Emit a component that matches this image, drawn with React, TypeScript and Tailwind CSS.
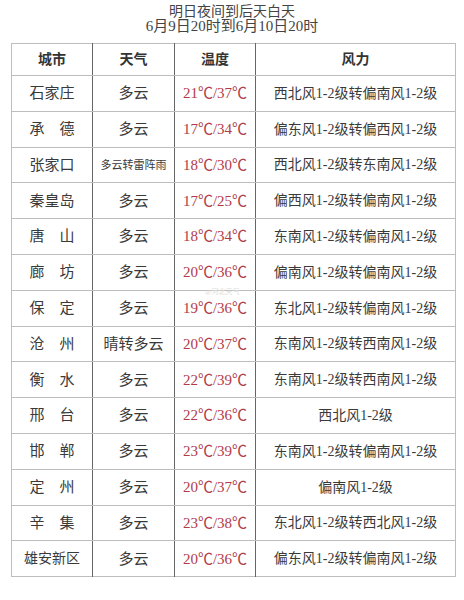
import React from 'react';

const rows: [string, string, string, string][] = [
  ['石家庄', '多云', '21℃/37℃', '西北风1-2级转偏南风1-2级'],
  ['承　德', '多云', '17℃/34℃', '偏东风1-2级转偏西风1-2级'],
  ['张家口', '多云转雷阵雨', '18℃/30℃', '西北风1-2级转东南风1-2级'],
  ['秦皇岛', '多云', '17℃/25℃', '偏西风1-2级转偏南风1-2级'],
  ['唐　山', '多云', '18℃/34℃', '东南风1-2级转偏南风1-2级'],
  ['廊　坊', '多云', '20℃/36℃', '偏南风1-2级转偏南风1-2级'],
  ['保　定', '多云', '19℃/36℃', '东北风1-2级转偏南风1-2级'],
  ['沧　州', '晴转多云', '20℃/37℃', '东南风1-2级转西南风1-2级'],
  ['衡　水', '多云', '22℃/39℃', '东南风1-2级转西南风1-2级'],
  ['邢　台', '多云', '22℃/36℃', '西北风1-2级'],
  ['邯　郸', '多云', '23℃/39℃', '东南风1-2级转偏南风1-2级'],
  ['定　州', '多云', '20℃/37℃', '偏南风1-2级'],
  ['辛　集', '多云', '23℃/38℃', '东北风1-2级转西北风1-2级'],
  ['雄安新区', '多云', '20℃/36℃', '偏东风1-2级转偏南风1-2级'],
];

const font = { fontFamily: '"Liberation Serif", "Noto Sans CJK SC", serif' };

export default function App() {
  return (
    <div className="w-[464px] h-[600px] bg-white text-[#3a3a3a] relative" style={font}>
      <div className="pt-[5px] text-center text-[14px] leading-[14px] text-[#444]">
        <p>明日夜间到后天白天</p>
        <p className="text-[15px]">6月9日20时到6月10日20时</p>
      </div>
      <div className="px-[11px] pt-[10px]">
        <table className="w-[444px] border-collapse table-fixed border border-[#bdbdbd]">
          <colgroup>
            <col className="w-[81px]" />
            <col className="w-[82px]" />
            <col className="w-[81px]" />
            <col className="w-[200px]" />
          </colgroup>
          <thead>
            <tr className="h-[32px] text-[14px] font-bold text-[#333]">
              <th className="border-r border-r-[#666] border-b border-b-[#bdbdbd]">城市</th>
              <th className="border-r border-r-[#666] border-b border-b-[#bdbdbd]">天气</th>
              <th className="border-r border-r-[#666] border-b border-b-[#bdbdbd]">温度</th>
              <th className="border-b border-b-[#bdbdbd]">风力</th>
            </tr>
          </thead>
          <tbody>
            {rows.map(([city, weather, temp, wind], i) => (
              <tr key={city} className="h-[35.8px]">
                <td className={`text-center border-r border-r-[#666] ${i < rows.length - 1 ? 'border-b border-b-[#bdbdbd]' : ''} ${city.length > 3 ? 'text-[14px]' : 'text-[15px]'}`}>
                  {city}
                </td>
                <td className={`text-center border-r border-r-[#666] ${i < rows.length - 1 ? 'border-b border-b-[#bdbdbd]' : ''} ${weather.length > 4 ? 'text-[11px]' : 'text-[15px]'}`}>
                  {weather}
                </td>
                <td className={`text-center border-r border-r-[#666] text-[15px] text-[#b23a48] ${i < rows.length - 1 ? 'border-b border-b-[#bdbdbd]' : ''}`}>
                  {temp}
                </td>
                <td className={`text-center text-[14px] text-[#3a3a3a] ${i < rows.length - 1 ? 'border-b border-b-[#bdbdbd]' : ''}`}>
                  {wind}
                </td>
              </tr>
            ))}
          </tbody>
        </table>
      </div>
      <span className="absolute left-[205px] top-[288px] text-[7px] leading-[8px] text-[#dddddd]">@河北天气</span>
    </div>
  );
}
